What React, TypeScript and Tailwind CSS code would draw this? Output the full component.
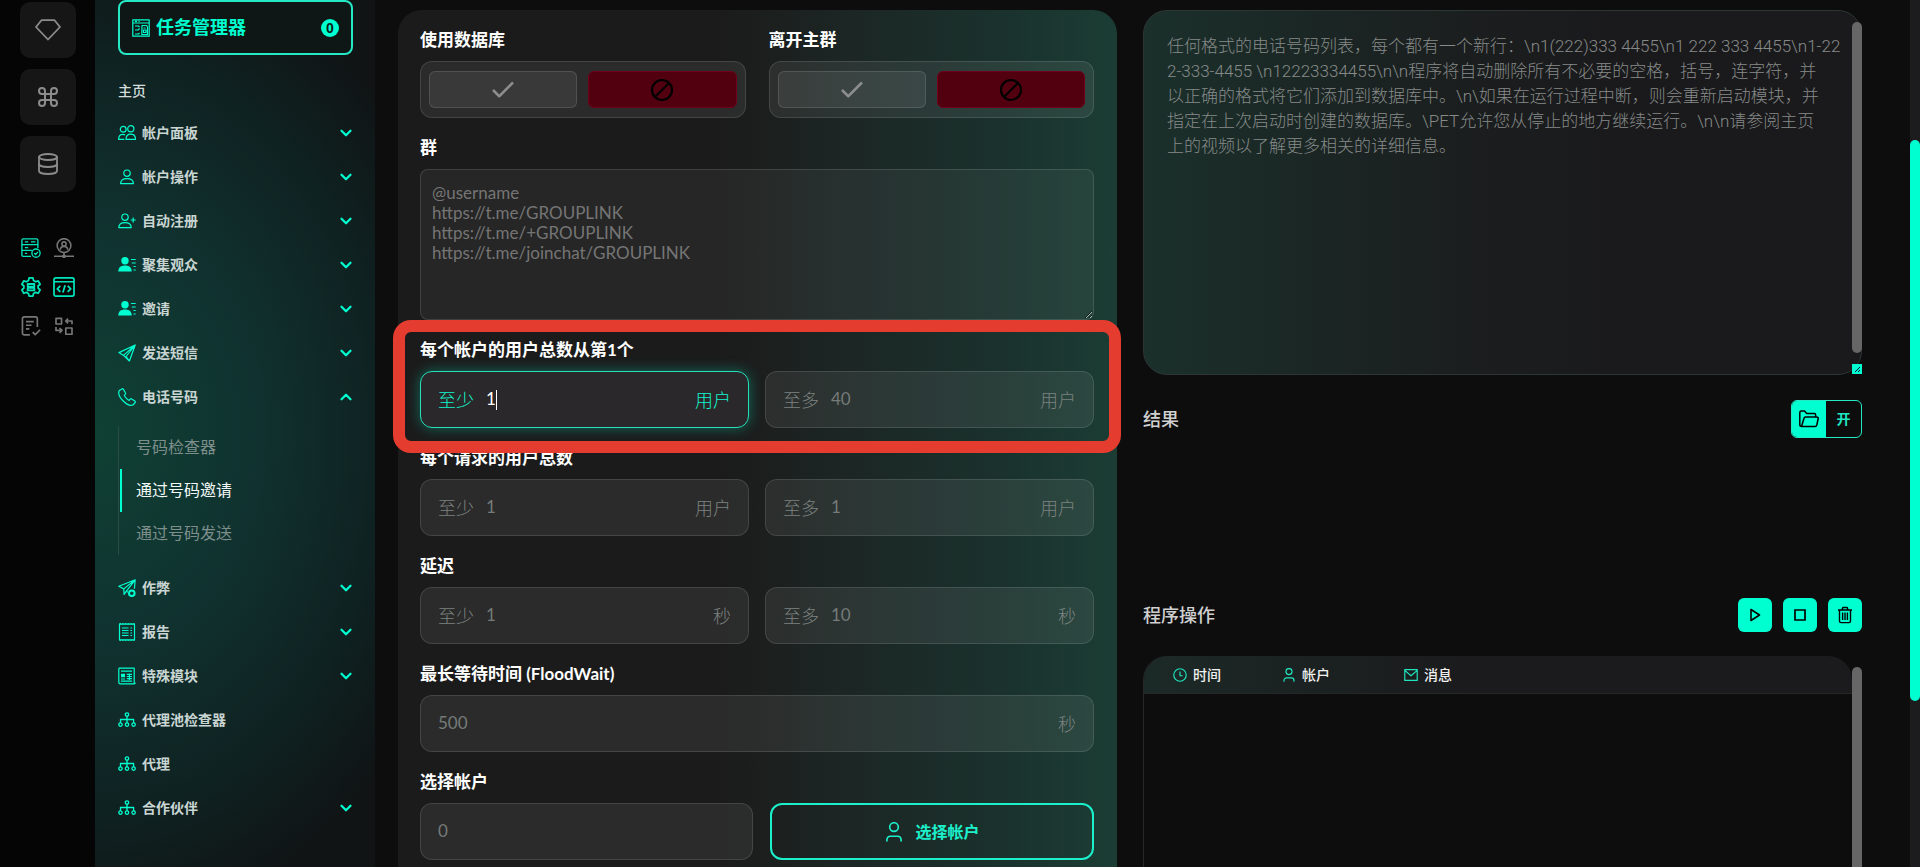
import type { ReactNode } from "react";
import { Check, ChevronDown, ChevronUp, Command, Database } from "lucide-react";

type IconProps = { children: ReactNode; size?: number; className?: string; strokeWidth?: number };

function Icon({ children, size = 18, className = "", strokeWidth = 1.2 }: IconProps) {
  return (
    <svg
      width={size}
      height={size}
      viewBox="0 0 18 18"
      fill="none"
      stroke="currentColor"
      strokeWidth={strokeWidth}
      strokeLinejoin="round"
      className={"shrink-0 " + className}
      aria-hidden="true"
    >
      {children}
    </svg>
  );
}

const UsersIcon = () => (
  <Icon>
    <circle cx="5.2" cy="5.2" r="2.9" />
    <circle cx="12.8" cy="4.8" r="3.1" />
    <path d="M8 15.4c0-3.4 1.8-5.2 4.8-5.2s4.700 1.800 4.700 5.200zM6.300 15.400H.6c0-3.200 1.600-5 4.200-5 .9 0 1.700.2 2.300.5" />
  </Icon>
);
const UserIcon = () => (
  <Icon>
    <circle cx="9" cy="5.200" r="3.200" />
    <path d="M2.600 15.600c0-3.400 2.400-5 6.400-5s6.400 1.600 6.400 5z" />
  </Icon>
);
const UserPlusIcon = () => (
  <Icon>
    <circle cx="7" cy="5.200" r="3.200" />
    <path d="M.8 15.600c0-3.400 2.400-5 6.200-5s6.200 1.600 6.200 5zM15.200 5.500v5M12.700 8h5" />
  </Icon>
);
const UserLinesIcon = () => (
  <Icon>
    <circle cx="7" cy="4.800" r="3.700" fill="currentColor" stroke="none" />
    <path d="M.3 15.600c0-4 2.400-6 6.700-6s6.700 2 6.700 6z" fill="currentColor" stroke="none" />
    <path d="M13 3.500h4.700M13.800 7h3.900M15.500 10.500h2.200M15.500 14h2.200" />
  </Icon>
);
const PlaneIcon = () => (
  <Icon>
    <path d="M17.200 1 .9 8.600l4.600 2.800L17.200 1 11.400 17l-3.300-4.500L17.200 1M5.500 11.400l5.900 5.600" />
  </Icon>
);
const PhoneIcon = () => (
  <Icon>
    <path d="M3.900.9 1.300 2.600c-1.600 3.300 1 7.600 3.900 10.400s6.700 5.200 9.700 4l2.300-2.500c.3-.5.2-1-.3-1.400l-3.300-2.200c-.5-.3-1-.2-1.400.2l-1 1.200c-1.400-.4-4.300-3.300-4.900-4.900l1-1c.4-.4.5-.9.2-1.400L5.300 1.100C5 .7 4.400.6 3.900.9z" />
  </Icon>
);
const CheatIcon = () => (
  <Icon>
    <path d="M17.200.8.8 7.300l5 2.600L17.200.8l-.8 9M5.800 9.900l.3 5.600 2.300-3.300M17.200.8 8.400 12.200l1.500 1" />
    <circle cx="13.800" cy="14.200" r="2.800" strokeWidth="2" />
  </Icon>
);
const ReportIcon = () => (
  <Icon>
    <path d="M1.500 1.200h15v15.600h-15z" />
    <path d="M1.500.7h15M1.500 17.300h15" strokeDasharray="1.500 1.200" strokeWidth="1" />
    <path d="M4 5h6.500M4 7.500h6.500M4 10h6.500M4 12.500h6.500M12.500 5H14M12.500 7.500H14M12.500 10H14M12.500 12.500H14" />
  </Icon>
);
const ModuleIcon = () => (
  <Icon>
    <path d="M.8 1.200h15.400v12.500M16.200 1.200v15.600H2.200C1.400 16.800.8 16.200.8 15.400V1.200M17.300 15.800v1" />
    <path d="M3 4.200h11M3 14.200h11M8.800 7.300H14M8.800 9.500H14M8.800 11.700H14M11.400 6.500v6.500" />
    <path d="M3 6.700h4v3.600H3zM3 11.500h4v1H3z" fill="currentColor" stroke="none" />
  </Icon>
);
const NetworkIcon = () => (
  <Icon strokeWidth={1.3}>
    <circle cx="9" cy="3.500" r="1.700" />
    <circle cx="2.500" cy="13.600" r="1.700" />
    <circle cx="9" cy="13.600" r="1.700" />
    <circle cx="15.600" cy="13.600" r="1.700" />
    <path d="M9 5.200v6.700M2.500 11.900V8.500h13.100v3.400" />
  </Icon>
);
const PersonIcon = ({ size = 20, className = "" }: { size?: number; className?: string }) => (
  <Icon size={size} className={className} strokeWidth={1.500}>
    <circle cx="9" cy="4.600" r="3.900" />
    <path d="M2.600 17.600v-1.300c0-2.300 1.200-3.500 3.200-3.500h6.400c2 0 3.200 1.200 3.200 3.500v1.300" />
  </Icon>
);
const TaskIcon = () => (
  <Icon>
    <path d="M.8.8h16.400v16.400H.8zM.8 4h16.400M3 2.400h2M6.500 2.400h1" />
    <path d="M3 7h3.500l1 1.200M3 11h3.500M3 15h3.500l1-1.200M7.500 9.500 6 11M10 6.500h4.500l1 1.500v7.500H9.800zM11.500 9h2M11.500 11h2.500v2.500h-2.500z" />
  </Icon>
);

type Item = { label: string; icon?: ReactNode; chevron?: "down" | "up" };

const upperItems: Item[] = [
  { label: "帐户面板", icon: <UsersIcon />, chevron: "down" },
  { label: "帐户操作", icon: <UserIcon />, chevron: "down" },
  { label: "自动注册", icon: <UserPlusIcon />, chevron: "down" },
  { label: "聚集观众", icon: <UserLinesIcon />, chevron: "down" },
  { label: "邀请", icon: <UserLinesIcon />, chevron: "down" },
  { label: "发送短信", icon: <PlaneIcon />, chevron: "down" },
  { label: "电话号码", icon: <PhoneIcon />, chevron: "up" },
];
const lowerItems: Item[] = [
  { label: "作弊", icon: <CheatIcon />, chevron: "down" },
  { label: "报告", icon: <ReportIcon />, chevron: "down" },
  { label: "特殊模块", icon: <ModuleIcon />, chevron: "down" },
  { label: "代理池检查器", icon: <NetworkIcon /> },
  { label: "代理", icon: <NetworkIcon /> },
  { label: "合作伙伴", icon: <NetworkIcon />, chevron: "down" },
];

function MenuItem({ label, icon, chevron }: Item) {
  return (
    <button type="button" className="flex h-11 w-full items-center text-left text-[#00ffd0]">
      {icon}
      <span className="ml-1.5 flex-1 text-sm font-bold text-[#c9d5d2]">{label}</span>
      {chevron === "down" && <ChevronDown size={18} strokeWidth={3} className="-mr-0.5" />}
      {chevron === "up" && <ChevronUp size={18} strokeWidth={3} className="-mr-0.5" />}
    </button>
  );
}

function Rail() {
  const tile = "flex size-14 items-center justify-center rounded-[10px] bg-[#161616] text-[#8c8c8c]";
  return (
    <nav className="w-[95px] shrink-0 bg-[#050505] pt-0.5">
      <div className="flex flex-col gap-[11px] pl-5">
        <button type="button" aria-label="Premium" className={tile}>
          <svg width="26" height="22" viewBox="0 0 26 22" fill="none" stroke="currentColor" strokeWidth="1.8" strokeLinejoin="round">
            <path d="M6.500 1.200h13L25 8 13 20.500 1 8z" />
          </svg>
        </button>
        <button type="button" aria-label="Commands" className={tile}>
          <Command size={24} strokeWidth={2} />
        </button>
        <button type="button" aria-label="Database" className={tile}>
          <Database size={24} strokeWidth={1.800} />
        </button>
      </div>
      <div className="mt-[46px] grid grid-cols-[20px_22px] justify-items-center gap-x-3 gap-y-[19px] pl-[21px] text-[#00e6bc]">
        <button type="button" aria-label="Servers" className="flex h-5 items-center">
          <Icon size={20}>
            <path d="M9 16.500H2c-.7 0-1.200-.5-1.200-1.200V2C.8 1.300 1.300.8 2 .8h12c.7 0 1.200.5 1.200 1.200v7M.8 6h14.400M.8 11.200h9M3.500 3.500h3M3.500 8.600h3M3.500 13.800h2M9 3.500h4" />
            <circle cx="13.500" cy="13.600" r="3.700" />
            <path d="m11.800 13.600 1.300 1.300 2.200-2.400" />
          </Icon>
        </button>
        <button type="button" aria-label="Proxy account" className="flex h-5 items-center text-[#777777]">
          <Icon size={20} strokeWidth={1.400}>
            <circle cx="9" cy="6.800" r="6.200" />
            <circle cx="9" cy="5.400" r="1.900" />
            <path d="M5.700 10.600c0-2 1.300-3 3.300-3s3.300 1 3.300 3M9 13v3M0 16.500h18" />
            <circle cx="9" cy="16.500" r="1" />
          </Icon>
        </button>
        <button type="button" aria-label="Settings" className="flex h-5 items-center">
          <Icon size={20} strokeWidth={1.600}>
            <path d="M7.300.8h3.400l.6 2.400 1.900 1.100 2.300-.8 1.700 3-1.800 1.600v1.800l1.800 1.700-1.700 3-2.300-.8-1.900 1.100-.6 2.300H7.300l-.6-2.300-1.900-1.100-2.300.8-1.700-3 1.800-1.700V8.100L.8 6.500l1.700-3 2.300.8 1.900-1.100z" />
            <rect x="6" y="6.300" width="6" height="2.300" />
            <rect x="6" y="9.800" width="6" height="2.300" />
          </Icon>
        </button>
        <button type="button" aria-label="Code" className="flex h-5 items-center">
          <Icon size={22} strokeWidth={1.400}>
            <rect x=".8" y="1.500" width="16.400" height="15" rx="1.500" />
            <path d="M.8 4.700h16.400M6 8l-2.500 2.500L6 13M12 8l2.500 2.500L12 13M9.900 7.500l-1.800 6" />
          </Icon>
        </button>
        <button type="button" aria-label="Tasks" className="flex h-5 items-center text-[#777777]">
          <Icon size={20} strokeWidth={1.500}>
            <path d="M8 17H3c-1 0-1.700-.7-1.700-1.700V2.500C1.300 1.500 2 .8 3 .8h10c1 0 1.700.7 1.700 1.700V10M4.500 5h7M4.500 8.300h5M4.500 11.600h3M10.500 14.500l2.300 2.300 4.400-4.400" />
          </Icon>
        </button>
        <button type="button" aria-label="Convert" className="flex h-5 items-center text-[#777777]">
          <Icon size={20} strokeWidth={1.500}>
            <rect x="1.800" y="2.200" width="5" height="5" />
            <rect x="10.600" y="10.800" width="5.600" height="5.600" />
            <path d="M16.200 7.500V4.500h-5.500M12.700 2.300l-2.200 2.200 2.200 2.200M1.800 10v3h5M5 10.800 7.200 13 5 15.200" />
          </Icon>
        </button>
      </div>
    </nav>
  );
}

function Sidebar() {
  return (
    <aside className="w-[280px] shrink-0 bg-[#101415] bg-[radial-gradient(ellipse_380px_500px_at_0_50%,#0f4034_0%,#103330_40%,#0f2222_75%,#101415_100%)] pr-[22px] pl-[23px]">
      <button
        type="button"
        className="flex h-[55px] w-full items-center rounded-lg border-2 border-[#25e8c4] bg-[#0f1716] px-3 text-[#00ffd0]"
      >
        <TaskIcon />
        <span className="ml-1.5 flex-1 text-left text-lg font-bold">任务管理器</span>
        <span className="flex size-[18px] items-center justify-center rounded-full bg-[#00ffd0] text-sm leading-none font-bold text-[#0d1a18]">
          0
        </span>
      </button>
      <a href="#home" className="mt-6 flex h-6 items-center text-sm font-medium text-[#d4dddb]">
        主页
      </a>
      <div className="mt-2">
        {upperItems.map((item) => (
          <MenuItem key={item.label} {...item} />
        ))}
      </div>
      <div className="mt-[7px] mb-[11px] border-l border-[#2b4a44]">
        <a href="#check" className="flex h-[43px] items-center pl-[17px] text-base text-[#7d8e8b]">
          号码检查器
        </a>
        <a
          href="#invite"
          className="ml-px flex h-[43px] items-center border-l-2 border-[#00ffd0] pl-3.5 text-base text-[#f1f7f6]"
        >
          通过号码邀请
        </a>
        <a href="#send" className="flex h-[43px] items-center pl-[17px] text-base text-[#7d8e8b]">
          通过号码发送
        </a>
      </div>
      {lowerItems.map((item) => (
        <MenuItem key={item.label} {...item} />
      ))}
    </aside>
  );
}

function Heading({ children }: { children: ReactNode }) {
  return <h3 className="mb-[9px] text-[17px] leading-6 font-bold text-white">{children}</h3>;
}

function Toggle({ title }: { title: string }) {
  return (
    <div>
      <Heading>{title}</Heading>
      <div className="grid h-[57px] grid-cols-2 gap-[11px] rounded-xl border border-white/12 bg-white/7 px-2 py-[9px]">
        <button
          type="button"
          aria-label={title + " 是"}
          aria-pressed="false"
          className="flex items-center justify-center rounded-md border border-white/12 bg-white/7 text-[#8d8d8d]"
        >
          <Check size={30} strokeWidth={2} strokeLinecap="butt" />
        </button>
        <button
          type="button"
          aria-label={title + " 否"}
          aria-pressed="true"
          className="flex items-center justify-center rounded-md border border-[#70001c] bg-[#520010] text-black"
        >
          <svg width="24" height="24" viewBox="0 0 24 24" fill="none" stroke="currentColor" strokeWidth="2.2" aria-hidden="true">
            <circle cx="12" cy="12" r="10" />
            <path d="M5 19 19 5" />
          </svg>
        </button>
      </div>
    </div>
  );
}

type FieldProps = { name: string; prefix?: string; placeholder?: string; value?: string; suffix?: string; active?: boolean };

function Field({ name, prefix, placeholder, value, suffix, active }: FieldProps) {
  return (
    <label
      className={
        "flex h-[57px] items-center rounded-xl border px-[17px] text-lg " +
        (active
          ? "border-[#25e0bb] bg-[#2a282a] text-[#12f5cc] shadow-[0_0_14px_rgba(0,255,208,0.35)]"
          : "border-white/12 bg-white/7 text-[#7c8280]")
      }
    >
      {prefix && <span className="mr-3 shrink-0 font-light">{prefix}</span>}
      <input
        type="text"
        aria-label={name}
        placeholder={placeholder}
        defaultValue={value}
        className={
          "bg-transparent font-[Lato,sans-serif] text-[17px] outline-none placeholder:text-[#757b79] " +
          (active ? "field-sizing-content text-white" : "min-w-0 flex-1")
        }
      />
      {active && <span className="h-5 w-px bg-white" />}
      {suffix && <span className="ml-auto shrink-0 font-light">{suffix}</span>}
    </label>
  );
}

function Settings() {
  return (
    <section className="flex flex-col gap-[18px] rounded-t-3xl bg-[linear-gradient(90deg,#1b1b1b_0%,#1b1b1b_45%,#1c2624_62%,#1a322d_85%,#1b3d34_100%)] pt-[18px] pr-[23px] pl-[22px]">
      <div className="grid grid-cols-2 gap-[23px]">
        <Toggle title="使用数据库" />
        <Toggle title="离开主群" />
      </div>
      <div>
        <Heading>群</Heading>
        <textarea
          aria-label="群"
          placeholder={"@username\nhttps://t.me/GROUPLINK\nhttps://t.me/+GROUPLINK\nhttps://t.me/joinchat/GROUPLINK"}
          className="block h-[151px] w-full resize-y rounded-lg border border-white/12 bg-white/5 px-[11px] py-[13px] font-[Lato,sans-serif] text-[17px] leading-5 outline-none placeholder:text-[#757575]"
        />
      </div>
      <div className="relative z-10">
        <Heading>每个帐户的用户总数从第1个</Heading>
        <div className="grid grid-cols-2 gap-4">
          <Field name="至少用户" prefix="至少" value="1" suffix="用户" active />
          <Field name="至多用户" prefix="至多" placeholder="40" suffix="用户" />
        </div>
        <div className="pointer-events-none absolute -inset-x-[27px] -top-[18px] -bottom-[25px] rounded-[18px] border-12 border-[#e53c30]" />
      </div>
      <div>
        <Heading>每个请求的用户总数</Heading>
        <div className="grid grid-cols-2 gap-4">
          <Field name="每个请求至少" prefix="至少" placeholder="1" suffix="用户" />
          <Field name="每个请求至多" prefix="至多" placeholder="1" suffix="用户" />
        </div>
      </div>
      <div>
        <Heading>延迟</Heading>
        <div className="grid grid-cols-2 gap-4">
          <Field name="延迟至少" prefix="至少" placeholder="1" suffix="秒" />
          <Field name="延迟至多" prefix="至多" placeholder="10" suffix="秒" />
        </div>
      </div>
      <div>
        <Heading>最长等待时间 (FloodWait)</Heading>
        <Field name="最长等待时间" placeholder="500" suffix="秒" />
      </div>
      <div>
        <Heading>选择帐户</Heading>
        <div className="grid grid-cols-[333fr_324fr] gap-[17px]">
          <Field name="选择帐户数量" placeholder="0" />
          <button
            type="button"
            className="flex items-center justify-center gap-[11px] rounded-xl border-2 border-[#1cf0cb] text-base font-bold text-[#1cf0cb]"
          >
            <PersonIcon />
            选择帐户
          </button>
        </div>
      </div>
    </section>
  );
}

const phoneHelp = [
  "任何格式的电话号码列表，每个都有一个新行：\\n1(222)333 4455\\n1 222 333 4455\\n1-22",
  "2-333-4455 \\n12223334455\\n\\n程序将自动删除所有不必要的空格，括号，连字符，并",
  "以正确的格式将它们添加到数据库中。\\n\\如果在运行过程中断，则会重新启动模块，并",
  "指定在上次启动时创建的数据库。\\PET允许您从停止的地方继续运行。\\n\\n请参阅主页",
  "上的视频以了解更多相关的详细信息。",
].join("\n");

function Output() {
  const square = "flex size-[34px] items-center justify-center rounded-md bg-[#00ffd0] text-black";
  return (
    <section className="flex min-h-0 min-w-0 flex-col">
      <div className="relative h-[365px] shrink-0">
        <textarea
          aria-label="电话号码列表"
          placeholder={phoneHelp}
          className="block size-full resize-none overflow-hidden rounded-3xl border border-[#2c3633] bg-[linear-gradient(90deg,#1b302b_0%,#1b2624_25%,#1b1e1e_45%,#1a1a1c_65%)] pt-[23px] pr-4 pl-[23px] font-[Roboto,'Noto_Sans_CJK_SC',sans-serif] text-[17px] leading-[25px] font-light whitespace-pre outline-none placeholder:text-[#868a89]"
        />
        <div className="absolute top-3 right-0 h-[331px] w-2.5 rounded-full bg-[#666666]" />
        <div className="absolute right-0 bottom-px flex size-2.5 items-end justify-end bg-[#00ffd0] p-0.5">
          <svg width="6" height="6" viewBox="0 0 6 6" stroke="#111144" strokeWidth="1">
            <path d="M1 6 6 1M4 6l2-2" />
          </svg>
        </div>
      </div>
      <div className="mt-[25px] flex h-[38px] shrink-0 items-center justify-between">
        <h2 className="text-lg leading-6 font-medium text-[#d0d0d0]">结果</h2>
        <button
          type="button"
          className="flex h-full w-[71px] items-center overflow-hidden rounded-md border border-[#25e8c4] text-sm font-bold text-[#20e6c0]"
        >
          <span className="flex h-full w-[34px] items-center justify-center bg-[#00ffd0] text-black">
            <svg width="20" height="18" viewBox="0 0 20 18" fill="none" stroke="currentColor" strokeWidth="1.5" strokeLinejoin="round">
              <path d="M2.500 16.500C1.500 16.500.8 15.800.8 15V2.500C.8 1.700 1.400 1 2.300 1h3.200l2.200 2.500h7.500c.9 0 1.500.6 1.500 1.500v1.500M2.500 16.500 5 8.200c.2-.8.700-1.200 1.400-1.200h11.400c1 0 1.600.6 1.400 1.500l-1.400 6.500c-.2 1-.8 1.500-1.700 1.500z" />
            </svg>
          </span>
          <span className="flex-1 text-center">开</span>
        </button>
      </div>
      <div className="mt-40 flex h-[34px] shrink-0 items-center justify-between">
        <h2 className="text-lg leading-6 font-medium text-[#d0d0d0]">程序操作</h2>
        <div className="flex gap-[11px]">
          <button type="button" aria-label="开始" className={square}>
            <svg width="12" height="14" viewBox="0 0 12 14" fill="none" stroke="currentColor" strokeWidth="1.600" strokeLinejoin="round">
              <path d="M2 1.500 10.500 7 2 12.500z" />
            </svg>
          </button>
          <button type="button" aria-label="停止" className={square}>
            <svg width="12" height="12" viewBox="0 0 12 12" fill="none" stroke="currentColor" strokeWidth="1.700">
              <path d="M1 1h10v10H1z" />
            </svg>
          </button>
          <button type="button" aria-label="删除" className={square}>
            <svg width="16" height="18" viewBox="0 0 16 18" fill="none" stroke="currentColor" strokeWidth="1.400" strokeLinejoin="round">
              <path d="M1 4h14M5 4l.8-2.500h4.400L11 4M2.500 4v11c0 1 .6 1.600 1.600 1.600h7.800c1 0 1.600-.6 1.600-1.600V4M5.600 6.500v7.500M8 6.500v7.500M10.400 6.500v7.500" />
            </svg>
          </button>
        </div>
      </div>
      <div className="relative mt-6 min-h-0 flex-1 overflow-hidden rounded-tl-3xl border-l border-[#262828] pr-2.5">
        <div className="overflow-hidden rounded-tr-3xl border-b border-[#262828]">
          <table className="w-full table-fixed bg-[linear-gradient(90deg,#1c2a27_0%,#1b2221_22%,#1b1b1d_45%)]">
            <thead>
              <tr className="h-[37px] text-left text-sm text-[#f0f0f0]">
                <th className="w-[109px] p-0 pl-[29px] font-medium">
                  <span className="flex items-center gap-1.5">
                    <Icon size={14} className="text-[#1fe5be]" strokeWidth={1.500}>
                      <circle cx="9" cy="9" r="8" />
                      <path d="M9 4.500V10h3.500" />
                    </Icon>
                    时间
                  </span>
                </th>
                <th className="w-[122px] p-0 pl-[29px] font-medium">
                  <span className="flex items-center gap-1.5">
                    <PersonIcon size={14} className="text-[#1fe5be]" />
                    帐户
                  </span>
                </th>
                <th className="p-0 pl-[29px] font-medium">
                  <span className="flex items-center gap-1.5">
                    <Icon size={14} className="text-[#1fe5be]" strokeWidth={1.500}>
                      <path d="M1 2h16v14H1zM1 3l8 7 8-7" />
                    </Icon>
                    消息
                  </span>
                </th>
              </tr>
            </thead>
          </table>
        </div>
        <div className="absolute top-[11px] right-0 bottom-0 w-2.5 rounded-t-full bg-[#666666]" />
      </div>
    </section>
  );
}

export default function App() {
  return (
    <div className="flex h-screen overflow-hidden bg-[#0d0d0e] font-['Liberation_Sans','Noto_Sans_CJK_SC',sans-serif]">
      <Rail />
      <Sidebar />
      <main className="grid min-w-0 flex-1 grid-cols-2 gap-[26px] pt-2.5 pr-12 pl-[23px] font-[Lato,'Noto_Sans_CJK_SC',sans-serif]">
        <Settings />
        <Output />
      </main>
      <div className="w-2.5 shrink-0 bg-[#1c1c1e]">
        <div className="mt-[140px] h-[561px] rounded-full bg-[#00ffd0]" />
      </div>
    </div>
  );
}
